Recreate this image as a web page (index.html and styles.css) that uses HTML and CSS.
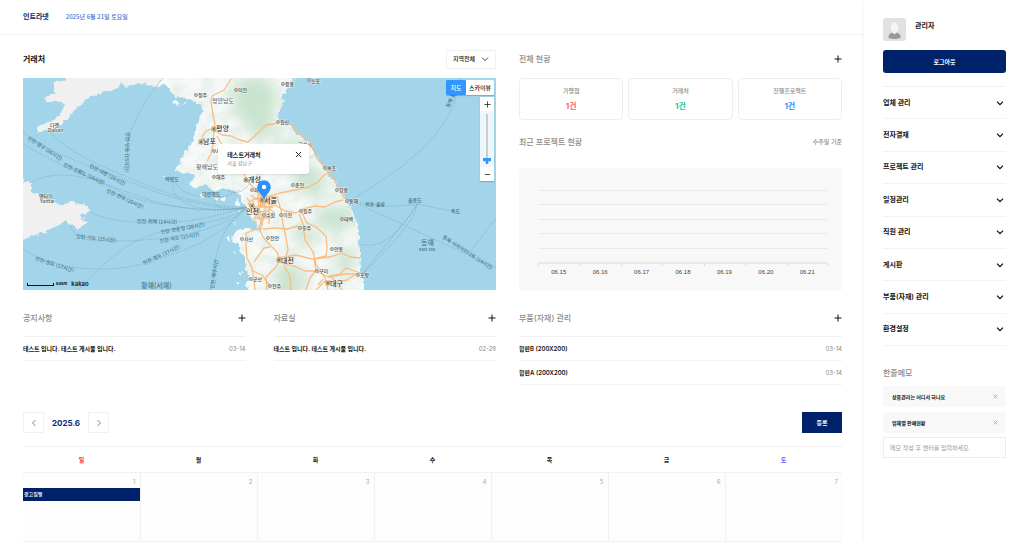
FILE: index.html
```
<!DOCTYPE html>
<html lang="ko">
<head>
	<meta charset="utf-8">
	<meta name="viewport" content="width=device-width, initial-scale=1.0">
	<title>인트라넷</title>
	<link rel="stylesheet" href="styles.css">
</head>
<body>

<svg class="defs" width="0" height="0">
	<symbol id="plus" viewBox="0 0 8 8"><path d="M4 0.5v7M0.5 4h7" fill="none" stroke="currentColor"/></symbol>
	<symbol id="down" viewBox="0 0 8 8"><path d="M1 2.6l3 3 3-3" fill="none" stroke="currentColor"/></symbol>
	<symbol id="close" viewBox="0 0 8 8"><path d="M1 1l6 6M7 1l-6 6" fill="none" stroke="currentColor"/></symbol>
</svg>

<div class="wrap">
	<div class="container">
		<header class="header">
			<h1><a href="#">인트라넷</a></h1>
			<span class="today">2025년 6월 21일 토요일</span>
		</header>

		<main class="main">
			<div class="dash">
				<!-- 거래처 지도 -->
				<section class="client">
					<div class="tit">
						<h2>거래처</h2>
						<div class="area">
							<select aria-label="지역">
								<option>지역전체</option>
							</select>
							<svg><use href="#down"/></svg>
						</div>
					</div>
					<div class="map">
						<svg class="mapImg" viewBox="23 78 473 212" preserveAspectRatio="xMidYMid slice">
							<defs>
								<filter id="coast" x="-5%" y="-5%" width="110%" height="110%">
									<feTurbulence type="fractalNoise" baseFrequency="0.2" numOctaves="2" seed="4"/>
									<feDisplacementMap in="SourceGraphic" scale="6" xChannelSelector="R" yChannelSelector="G"/>
								</filter>
								<filter id="terrain" x="0" y="0" width="100%" height="100%">
									<feTurbulence type="fractalNoise" baseFrequency="0.07 0.09" numOctaves="5" seed="9"/>
									<feColorMatrix values="0 0 0 0 0.62  0 0 0 0 0.78  0 0 0 0 0.65  2.6 0 0 0 -0.95" result="n"/>
									<feComposite in="n" in2="SourceGraphic" operator="in"/>
								</filter>
								<filter id="soft"><feGaussianBlur stdDeviation="7"/></filter>
								<clipPath id="landClip">
									<path d="M163 78L157 88L165 84L172 92L176 97L188 98L193 102L203 105L202 113L198 121L196 130L193 140L187 150L181 158L179 166L174 172L188 173L195 176L189 184L196 190L205 184L215 193L222 188L232 190L240 195L245 205L247 210L250 216L255 222L258 232L250 228L240 229L232 236L231 243L238 244L240 250L245 258L246 270L250 278L246 284L249 292H363L364 280L360 270L361 255L359 245L359 232L354 217L348 203L341 190L335 182L326 172L318 158L311 145L305 141L295 132L288 124L279 120L278 112L284 105L283 95L290 86L300 78Z"/>
								</clipPath>
								<g id="dot">
									<circle r="1.6" fill="#fff" stroke="#666" stroke-width="0.6"/>
									<circle r="0.7" fill="#555"/>
								</g>
								<g id="dotBig">
									<rect x="-2" y="-2" width="4" height="4" rx="1" fill="#e6d8a6" stroke="#7a6a35" stroke-width="0.6"/>
									<circle r="0.9" fill="#5c4f25"/>
								</g>
							</defs>

							<rect x="23" y="78" width="473" height="212" fill="#a2d5ea"/>

							<!-- 중국 -->
							<g filter="url(#coast)" fill="#f0f0f0">
								<path d="M69 70L65 80L54 83L53 88L56 92L45 97L46 102L57 102L65 104L61 113L56 119L47 123L38 126L38 133L45 130L52 129L62 124L72 113L83 103L93 96L105 92L118 88L121 83L126 88L140 83L155 87L159 83L165 70Z"/>
								<path d="M18 176L23 180L32 183L32 192L38 195L50 202L60 205L72 202L78 204L89 205L90 212L80 215L87 223L78 229L65 222L53 228L43 233L32 236L18 242Z"/>
							</g>

							<!-- 한반도 -->
							<g filter="url(#coast)">
								<path fill="#f7f9f8" d="M165 70L157 88L165 84L172 92L176 97L188 98L193 102L203 105L202 113L198 121L196 130L193 140L187 150L181 158L179 166L174 172L188 173L195 176L189 184L196 190L205 184L215 193L222 188L232 190L240 195L245 205L247 210L250 216L255 222L258 232L250 228L240 229L232 236L231 243L238 244L240 250L245 258L246 270L250 278L246 284L249 298H364L364 280L360 270L361 255L359 245L359 232L354 217L348 203L341 190L335 182L326 172L318 158L311 145L305 141L295 132L288 124L279 120L278 112L284 105L283 95L290 86L300 70Z"/>
								<path fill="#f7f9f8" d="M172 102l5-2 3 3-4 2zM184 102l3 1-2 2zM200 194l5 1-1 3-4-1zM212 196l6 1-2 3zM220 199l4-2 2 4-4 1zM236 199l5 3-2 6-4-3zM238 210l2 2-2 2zM234 222l2 1-1 2zM228 237l2 2-2 3zM235 250l2 2-2 2zM240 272l2 2-3 2zM236 281l3 1-2 3zM163 175l3 1-2 1z"/>
							</g>
							<g clip-path="url(#landClip)">
								<g filter="url(#soft)" fill="#b9dcc0" opacity="0.75">
									<ellipse cx="254" cy="100" rx="22" ry="24"/>
									<ellipse cx="262" cy="128" rx="14" ry="10"/>
									<ellipse cx="292" cy="147" rx="12" ry="8"/>
									<ellipse cx="309" cy="180" rx="20" ry="12" transform="rotate(50 309 180)"/>
									<ellipse cx="336" cy="218" rx="20" ry="12"/>
									<ellipse cx="289" cy="283" rx="14" ry="20"/>
									<ellipse cx="303" cy="235" rx="12" ry="8"/>
									<ellipse cx="345" cy="262" rx="8" ry="16"/>
								</g>
								<rect x="160" y="78" width="210" height="212" filter="url(#terrain)" opacity="0.4"/>
							</g>

							<!-- 도로 -->
							<g fill="none" stroke="#f9bd82" stroke-width="1.3" stroke-linejoin="round">
								<path d="M231 79L224 90L212 96L211 102L213 115L215 124L214 128L206 131L202 137L201 143"/>
								<path d="M214 129L213 145L211 154L207 161M214 130L222 135L231 136L240 140L248 142L258 133L266 125L274 124L281 122L290 124L299 133L309 141L313 147L316 157L325 168L333 178L339 189L345 199"/>
								<path d="M217 136L225 150L236 161L243 172L248 182L256 190L262 198M262 198L270 196L280 193L295 190L309 187L318 182L324 175L328 173"/>
								<path d="M262 202L275 205L285 211L296 213L303 209L315 206L325 207L335 202L343 200M268 196L277 197L281 210L283 224L286 238L288 250L284 262L285 268L290 276L291 290"/>
								<path d="M262 200L259 208L262 218L259 228L263 237L268 243L277 252L280 260L275 268L266 277L267 290M277 258L296 255L312 259L330 257L342 253L350 257L360 258M280 262L294 266L305 271L316 271L328 277L345 274L358 274"/>
								<path d="M299 214L303 224L305 240L313 252L316 264L325 278L328 290M300 209L307 223L316 227L326 236L327 247L326 256L314 259L316 270L310 278L306 290"/>
								<path d="M260 228L246 233L246 245L247 258L252 268L254 280L255 290M263 229L275 228L287 229L298 226M264 216L260 232M254 262L264 248L270 247M251 270L262 275L270 286"/>
								<path d="M330 275L336 282L347 280L356 274M328 277L340 274L346 268L360 273M326 280L316 290M330 280L343 290M323 279L318 285"/>
								<path d="M249 202L257 198L271 199L273 204L268 211L258 212L251 208L248 203M253 198L254 214M258 192L259 220M264 192L266 218M269 196L269 224M252 207L273 207M254 218L272 218M251 195L275 213M247 198L263 225M273 197L252 213M265 195L253 222"/>
							</g>

							<!-- 휴전선 -->
							<path d="M228 191C240 196 246 188 250 183S262 169 278 166S303 163 310 158S316 152 313 148" fill="none" stroke="#999" stroke-width="0.6" stroke-dasharray="1.5 1"/>

							<!-- 항로 -->
							<g fill="none" stroke="#76a5b6" stroke-width="0.6" stroke-dasharray="1.6 1.2">
								<path d="M163 78C152 90 142 106 134 124S126 152 130 168"/>
								<path d="M48 128C60 150 110 170 144 184S210 207 244 207"/>
								<path d="M23 132C60 160 100 168 126 180S210 211 244 208"/>
								<path d="M23 144C70 172 120 190 150 200S215 212 246 208"/>
								<path d="M30 183C42 176 60 172 86 178S120 196 150 202S220 213 246 207"/>
								<path d="M90 212C104 220 130 223 160 223S225 214 247 207"/>
								<path d="M70 226C78 242 90 241 120 241S220 235 247 207"/>
								<path d="M23 248C50 272 115 273 145 263S215 244 247 207"/>
								<path d="M78 290C105 260 130 240 160 232S230 222 247 207"/>
								<path d="M210 290C216 262 214 232 247 207M175 181C178 190 188 196 207 197S232 194 240 190M173 182C170 202 195 214 246 208M214 197C214 210 225 211 246 207"/>
								<path d="M460 78C456 120 424 158 352 199M352 201C375 207 400 207 417 204M352 201L496 268M417 204L451 211M417 204C405 225 378 252 363 274M417 204C415 225 378 256 363 274M417 204C400 232 382 250 361 244M496 218L470 252"/>
							</g>

							<g class="seaTxt">
								<text transform="translate(27 139) rotate(33)">인천-영구 (26시간)</text>
								<text transform="translate(63 166) rotate(25)">인천-진황도 (24시간)</text>
								<text transform="translate(89 167) rotate(28)">인천-대련 (16시간)</text>
								<text transform="translate(126 132) rotate(92)">인천-단동 (15시간)</text>
								<text transform="translate(106 192) rotate(25)">인천-연태 (16시간)</text>
								<text transform="translate(137 223) rotate(1)">인천-위해 (14시간)</text>
								<text transform="translate(161 234) rotate(-10)">인천-연운항 (26시간)</text>
								<text transform="translate(160 243) rotate(-10)">인천-석도 (15시간)</text>
								<text transform="translate(76 238) rotate(6)">인천-석도 (15시간)</text>
								<text transform="translate(35 260) rotate(18)">인천-청도 (17시간)</text>
								<text transform="translate(144 265) rotate(-25)">인천-청도 (17시간)</text>
								<text transform="translate(214 289) rotate(-82)">인천-제주시간</text>
								<text transform="translate(365 206) rotate(2)">묵호-울릉</text>
								<text transform="translate(442 238) rotate(33)">동해-사카이미나토 (14시간)</text>
								<text transform="translate(449 108) rotate(-65)">동해-블</text>
								<text x="408" y="202">울릉도</text>
								<text x="451" y="213">독도</text>
								<text x="202" y="196">대연평도</text>
								<text x="165" y="181">백령도</text>
								<text class="big" x="141" y="288">황해(서해)</text>
								<text class="big" x="421" y="245">동해</text>
								<text class="en" x="419" y="251">East Sea</text>
							</g>

							<g class="cityTxt">
								<text x="50" y="127">다롄</text>
								<text x="48" y="132">Dalian</text>
								<text x="39" y="198">옌타이</text>
								<text x="40" y="203">Yantai</text>
								<text class="prov" x="212" y="103">평안남도</text>
								<text class="prov" x="196" y="169">황해남도</text>
								<g transform="translate(196 95)"><use href="#dot"/><text x="2" y="2">정주</text></g>
								<g transform="translate(236 90)"><use href="#dot"/><text x="2" y="2">덕천</text></g>
								<g transform="translate(283 84)"><use href="#dot"/><text x="2" y="2">함흥</text></g>
								<g transform="translate(309 80)"><use href="#dot"/><text x="2" y="3">신포</text></g>
								<g transform="translate(278 122)"><use href="#dot"/><text x="2" y="2">원산</text></g>
								<g transform="translate(214 151)"><use href="#dot"/><text x="2" y="2">사리원</text></g>
								<g transform="translate(214 177)"><use href="#dot"/><text x="2" y="2">해주</text></g>
								<text x="298" y="146">고성시</text>
								<g transform="translate(325 168)"><use href="#dot"/><text x="2" y="2">속초</text></g>
								<g transform="translate(293 185)"><use href="#dot"/><text x="2" y="2">춘천</text></g>
								<g transform="translate(337 190)"><use href="#dot"/><text x="2" y="2">강릉</text></g>
								<g transform="translate(347 201)"><use href="#dot"/><text x="2" y="2">동해</text></g>
								<g transform="translate(342 219)"><use href="#dot"/><text x="2" y="2">태백</text></g>
								<g transform="translate(301 211)"><use href="#dot"/><text x="2" y="2">원주</text></g>
								<g transform="translate(264 215)"><use href="#dot"/><text x="2" y="2">수원</text></g>
								<g transform="translate(281 215)"><use href="#dot"/><text x="2" y="2">이천</text></g>
								<g transform="translate(300 228)"><use href="#dot"/><text x="2" y="2">충주</text></g>
								<g transform="translate(242 239)"><use href="#dot"/><text x="2" y="2">서산</text></g>
								<g transform="translate(268 238)"><use href="#dot"/><text x="2" y="2">천안</text></g>
								<g transform="translate(332 249)"><use href="#dot"/><text x="2" y="2">안동</text></g>
								<g transform="translate(317 271)"><use href="#dot"/><text x="2" y="2">구미</text></g>
								<g transform="translate(358 275)"><use href="#dot"/><text x="2" y="2">포항</text></g>
								<g transform="translate(251 279)"><use href="#dot"/><text x="2" y="2">군산</text></g>
								<g transform="translate(270 286)"><use href="#dot"/><text x="2" y="2">전주</text></g>
								<g transform="translate(252 190)"><use href="#dot"/><text x="2" y="2">파주</text></g>
							</g>

							<g class="metroTxt">
								<g transform="translate(214 129)"><use href="#dotBig"/><text x="2" y="2">평양</text></g>
								<g transform="translate(201 142)"><use href="#dotBig"/><text x="2" y="2">남포</text></g>
								<g transform="translate(246 180)"><use href="#dotBig"/><text x="2" y="2">개성</text></g>
								<g transform="translate(262 200)"><use href="#dotBig"/><text x="2" y="3">서울</text></g>
								<g transform="translate(252 206)"><use href="#dotBig"/><text x="-6" y="8">인천</text></g>
								<g transform="translate(279 260)"><use href="#dotBig"/><text x="2" y="3">대전</text></g>
								<g transform="translate(328 283)"><use href="#dotBig"/><text x="2" y="3">대구</text></g>
							</g>

							<!-- 마커 -->
							<path d="M264 199.500C262.500 195 257.200 192 257.200 187A6.800 6.800 0 0 1 270.800 187C270.800 192 265.500 195 264 199.500Z" fill="#2f8ffb"/>
							<circle cx="264" cy="187" r="2.200" fill="#fff"/>
						</svg>

						<div class="mapType">
							<button type="button" class="on">지도</button>
							<button type="button">스카이뷰</button>
						</div>
						<div class="mapZoom">
							<button type="button" aria-label="확대"><svg><use href="#plus"/></svg></button>
							<input type="range" min="0" max="14" value="0" aria-label="지도 확대 수준">
							<button type="button" aria-label="축소"><svg viewBox="0 0 8 8"><path d="M1 4h6" stroke="#333"/></svg></button>
						</div>
						<div class="info">
							<div>
								<strong>테스트거래처</strong>
								<p>서울 강남구</p>
							</div>
							<button type="button" aria-label="닫기"><svg><use href="#close"/></svg></button>
						</div>
						<div class="scale">
							<i></i><span>64km</span><b>kakao</b>
						</div>
					</div>
				</section>

				<!-- 현황 -->
				<section class="state">
					<div class="tit">
						<h3>전체 현황</h3>
						<a href="#" class="more" aria-label="전체 현황 더보기"><svg><use href="#plus"/></svg></a>
					</div>
					<ul class="count">
						<li><span>가맹점</span><b class="red">1건</b></li>
						<li><span>거래처</span><b class="green">1건</b></li>
						<li><span>진행프로젝트</span><b class="blue">1건</b></li>
					</ul>
					<div class="tit tit-chart">
						<h3>최근 프로젝트 현황</h3>
						<span class="std">수주일 기준</span>
					</div>
					<div class="chart">
						<div class="plot"><i></i><i></i><i></i><i></i><i></i></div>
						<ol class="axis">
							<li>06.15</li>
							<li>06.16</li>
							<li>06.17</li>
							<li>06.18</li>
							<li>06.19</li>
							<li>06.20</li>
							<li>06.21</li>
						</ol>
					</div>
				</section>
			</div>

			<!-- 게시판 -->
			<div class="dash boards">
				<div class="pair">
					<section>
						<div class="tit">
							<h3>공지사항</h3>
							<a href="#" class="more" aria-label="공지사항 더보기"><svg><use href="#plus"/></svg></a>
						</div>
						<ul class="list">
							<li><a href="#">테스트 입니다. 테스트 게시물 입니다.</a><span>03-14</span></li>
						</ul>
					</section>
					<section>
						<div class="tit">
							<h3>자료실</h3>
							<a href="#" class="more" aria-label="자료실 더보기"><svg><use href="#plus"/></svg></a>
						</div>
						<ul class="list">
							<li><a href="#">테스트 입니다. 테스트 게시물 입니다.</a><span>02-28</span></li>
						</ul>
					</section>
				</div>
				<section>
					<div class="tit">
						<h3>부품(자재) 관리</h3>
						<a href="#" class="more" aria-label="부품(자재) 관리 더보기"><svg><use href="#plus"/></svg></a>
					</div>
					<ul class="list">
						<li><a href="#">합판B (200X200)</a><span>03-14</span></li>
						<li><a href="#">합판A (200X200)</a><span>03-14</span></li>
					</ul>
				</section>
			</div>

			<!-- 일정 -->
			<section class="schedule">
				<div class="calTop">
					<button type="button" class="arrow" aria-label="이전 달"><svg viewBox="0 0 8 8"><path d="M5.500 1l-3 3 3 3" fill="none" stroke="#777" stroke-width="0.900"/></svg></button>
					<strong>2025.6</strong>
					<button type="button" class="arrow" aria-label="다음 달"><svg viewBox="0 0 8 8"><path d="M2.500 1l3 3-3 3" fill="none" stroke="#777" stroke-width="0.900"/></svg></button>
					<button type="button" class="reg">등록</button>
				</div>
				<table class="cal">
					<thead>
						<tr>
							<th class="sun">일</th>
							<th>월</th>
							<th>화</th>
							<th>수</th>
							<th>목</th>
							<th>금</th>
							<th class="sat">토</th>
						</tr>
					</thead>
					<tbody>
						<tr>
							<td><span>1</span><a href="#" class="event">광고집행</a></td>
							<td><span>2</span></td>
							<td><span>3</span></td>
							<td><span>4</span></td>
							<td><span>5</span></td>
							<td><span>6</span></td>
							<td><span>7</span></td>
						</tr>
					</tbody>
				</table>
			</section>
		</main>
	</div>

	<aside class="side">
		<div class="user">
			<svg viewBox="0 0 23 23">
				<rect width="23" height="23" rx="3" fill="#e1e1e1"/>
				<path d="M5.500 20C5 16 8 14.500 11.500 14.500S18 16 17.500 20Q11.500 22 5.500 20Z" fill="#999"/>
				<path d="M9.500 12h4v3q-2 2-4 0z" fill="#eee"/>
				<ellipse cx="11.500" cy="9.500" rx="3.800" ry="5" fill="#f6f6f6"/>
				<path d="M9.500 9h1M12.500 9h1M10.300 12q1.200 0.800 2.400 0" fill="none" stroke="#d0d0d0" stroke-width="0.600"/>
			</svg>
			<strong>관리자</strong>
		</div>
		<button type="button" class="logout">로그아웃</button>
		<nav>
			<ul class="menu">
				<li><a href="#">업체 관리<svg><use href="#down"/></svg></a></li>
				<li><a href="#">전자결재<svg><use href="#down"/></svg></a></li>
				<li><a href="#">프로젝트 관리<svg><use href="#down"/></svg></a></li>
				<li><a href="#">일정관리<svg><use href="#down"/></svg></a></li>
				<li><a href="#">직원 관리<svg><use href="#down"/></svg></a></li>
				<li><a href="#">게시판<svg><use href="#down"/></svg></a></li>
				<li><a href="#">부품(자재) 관리<svg><use href="#down"/></svg></a></li>
				<li><a href="#">환경설정<svg><use href="#down"/></svg></a></li>
			</ul>
		</nav>
		<div class="memo">
			<h3><label for="memo">한줄메모</label></h3>
			<ul>
				<li>상품관리는 어디서 하나요<button type="button" aria-label="삭제"><svg><use href="#close"/></svg></button></li>
				<li>업체별 판매현황<button type="button" aria-label="삭제"><svg><use href="#close"/></svg></button></li>
			</ul>
			<input type="text" id="memo" placeholder="메모 작성 후 엔터를 입력하세요.">
		</div>
	</aside>
</div>

</body>
</html>
```
FILE: styles.css
```
*{
	box-sizing: border-box;
	margin: 0;
	padding: 0;
}
body{
	background: #fff;
	color: #111;
	font: 6px/12px Inter, "Noto Sans CJK KR", sans-serif;
}
ul, ol{
	list-style: none;
}
a{
	color: inherit;
	text-decoration: none;
}
button, input, select{
	border: 0;
	background: none;
	color: inherit;
	font: inherit;
}
button{
	cursor: pointer;
}
svg{
	display: block;
	flex: none;
	width: 8px;
	height: 8px;
}
.defs{
	position: absolute;
	width: 0;
	height: 0;
}

.wrap{
	display: flex;
	min-height: 100vh;
}
.container{
	flex: 1;
	min-width: 0;
}
.header{
	display: flex;
	align-items: center;
	gap: 17px;
	height: 35px;
	padding: 0 23px;
	border-bottom: 1px solid #f3f3f3;
}
.header h1{
	font-size: 7px;
	color: #00226b;
}
.header .today{
	font-family: "Noto Sans CJK KR", sans-serif;
	font-weight: 500;
	color: #3f70cc;
}
.main{
	padding: 12px 22px 0 23px;
}

/* 공통 타이틀 */
.tit{
	display: flex;
	align-items: center;
	justify-content: space-between;
	height: 24px;
}
.tit h2{
	font-size: 8px;
	font-weight: 700;
}
.tit h3,
.memo h3{
	font-size: 8px;
	font-weight: 500;
	color: #8c8c8c;
}
.tit .more svg{
	color: #111;
}
.tit .std{
	font-weight: 500;
	color: #8c8c8c;
}

.dash{
	display: grid;
	grid-template-columns: 473fr 323fr;
	column-gap: 23px;
}

/* 지도 */
.area{
	position: relative;
}
.area select{
	width: 50px;
	height: 19px;
	padding: 0 8px 0 6px;
	border: 1px solid #f1f1f1;
	appearance: none;
	font-weight: 500;
	font-size: 6px;
}
.area svg{
	position: absolute;
	right: 7px;
	top: 5px;
	color: #444;
	pointer-events: none;
}
.map{
	position: relative;
	margin-top: 7px;
	overflow: hidden;
}
.mapImg{
	width: 100%;
	height: auto;
	aspect-ratio: 473 / 212;
}
.mapImg text{
	font-family: "Noto Sans CJK KR", sans-serif;
	font-size: 5px;
	font-weight: 500;
}
.seaTxt text{
	fill: #4a7685;
}
.seaTxt .big{
	font-size: 7px;
}
.seaTxt .en{
	font-size: 4px;
}
.cityTxt text{
	fill: #555;
	stroke: #fff;
	stroke-width: 1px;
	stroke-opacity: .6;
	paint-order: stroke;
}
.cityTxt .prov{
	font-size: 6px;
	fill: #777;
}
.metroTxt text{
	font-size: 7px;
	fill: #333;
	stroke: #fff;
	stroke-width: 1px;
	stroke-opacity: .6;
	paint-order: stroke;
}
.mapType{
	position: absolute;
	right: 2px;
	top: 2px;
	display: flex;
	background: #fff;
	border-radius: 1px;
	box-shadow: 0 1px 1px rgba(0,0,0,.2);
}
.mapType button{
	height: 15px;
	padding: 0 3px;
	font-weight: 500;
}
.mapType .on{
	width: 20px;
	background: #3396ff;
	border-radius: 1px;
	color: #fff;
}
.mapZoom{
	position: absolute;
	right: 2px;
	top: 19px;
	display: flex;
	flex-direction: column;
	width: 14px;
	background: rgba(255,255,255,.8);
	box-shadow: 0 1px 1px rgba(0,0,0,.2);
}
.mapZoom button{
	display: flex;
	align-items: center;
	justify-content: center;
	height: 14px;
	background: #fff;
	color: #333;
}
.mapZoom svg{
	width: 7px;
	height: 7px;
}
.mapZoom input{
	width: 14px;
	height: 50px;
	margin: 3px 0;
	appearance: none;
	writing-mode: vertical-lr;
	direction: rtl;
}
.mapZoom input::-webkit-slider-runnable-track{
	width: 2px;
	height: 50px;
	background: #ccc;
}
.mapZoom input::-webkit-slider-thumb{
	appearance: none;
	width: 8px;
	height: 6px;
	margin-left: -3px;
	background: #3396ff;
	clip-path: polygon(0 0, 100% 0, 100% 50%, 65% 60%, 65% 100%, 35% 100%, 35% 60%, 0 50%);
}
.info{
	position: absolute;
	left: 41.300%;
	top: 31%;
	display: flex;
	justify-content: space-between;
	width: 91px;
	height: 30px;
	padding: 6px 7px 0 9px;
	background: #fff;
	border-radius: 3px;
	box-shadow: 0 1px 2px rgba(0,0,0,.1);
}
.info strong{
	display: block;
	font-size: 6px;
	line-height: 10px;
}
.info p{
	font-size: 5px;
	line-height: 7px;
	color: #888;
}
.info button{
	height: 10px;
}
.info svg{
	width: 7px;
	height: 7px;
}
.scale{
	position: absolute;
	left: 4px;
	bottom: 1px;
	display: flex;
	align-items: center;
	gap: 2px;
	line-height: 10px;
}
.scale i{
	width: 27px;
	height: 3px;
	border: 1px solid #111;
	border-top: 0;
}
.scale span{
	font-size: 4px;
	font-weight: 700;
}
.scale b{
	margin-left: 2px;
	font-weight: 600;
}

/* 현황 */
.count{
	display: flex;
	gap: 5px;
	margin-top: 7px;
}
.count li{
	flex: 1;
	height: 42px;
	padding-top: 6px;
	border: 1px solid #eee;
	border-radius: 4px;
	text-align: center;
}
.count span{
	display: block;
	font-weight: 500;
	color: #8c8c8c;
}
.count b{
	display: block;
	line-height: 18px;
	font-size: 8px;
}
.red{
	color: #ff6565;
}
.green{
	color: #14cc93;
}
.blue{
	color: #1494ff;
}
.tit-chart{
	margin-top: 10px;
}
.chart{
	margin-top: 14px;
	padding: 22px 14px 14px 19px;
	background: #f8f8f8;
	border-radius: 4px;
}
.plot{
	display: flex;
	flex-direction: column;
	height: 74px;
	border-bottom: 2px solid #e8e8e8;
}
.plot i{
	flex: 1;
	border-top: 1px solid #eaeaea;
}
.axis{
	display: flex;
}
.axis li{
	flex: 1;
	padding-top: 3px;
	text-align: center;
	font: 6px/10px "Liberation Sans", sans-serif;
	color: #444;
	background: linear-gradient(#ddd, #ddd) left top / 1px 2px no-repeat;
}
.axis li:last-child{
	background: linear-gradient(#ddd, #ddd) left top / 1px 2px no-repeat, linear-gradient(#ddd, #ddd) right top / 1px 2px no-repeat;
}

/* 게시판 */
.boards{
	min-height: 96px;
	margin-top: 15px;
}
.pair{
	display: grid;
	grid-template-columns: 1fr 1fr;
	column-gap: 28px;
}
.list{
	margin-top: 6px;
	border-top: 1px solid #f1f1f1;
}
.list li{
	display: flex;
	align-items: center;
	justify-content: space-between;
	height: 24px;
	border-bottom: 1px solid #f3f3f3;
}
.list a{
	font-weight: 600;
}
.list span{
	color: #888;
}

/* 일정 */
.calTop{
	display: flex;
	align-items: center;
	margin-top: 10px;
}
.calTop strong{
	padding: 0 8px;
	font-size: 8px;
	color: #0b2a70;
}
.arrow{
	display: flex;
	align-items: center;
	justify-content: center;
	width: 21px;
	height: 21px;
	border: 1px solid #f1f1f1;
}
.reg{
	width: 40px;
	height: 21px;
	margin-left: auto;
	background: #00226b;
	color: #fff;
	font-weight: 600;
}
.cal{
	width: 100%;
	margin-top: 13px;
	border-collapse: collapse;
	table-layout: fixed;
}
.cal th{
	height: 26px;
	border-top: 1px solid #f1f1f1;
	font-weight: 700;
}
.cal .sun{
	color: #f22;
}
.cal .sat{
	color: #66f;
}
.cal td{
	height: 69px;
	padding-top: 3px;
	border: 1px solid #f1f1f1;
	border-left: 0;
	background: #fdfdfd;
	vertical-align: top;
}
.cal td:last-child{
	border-right: 0;
}
.cal td span{
	display: block;
	padding-right: 4px;
	text-align: right;
	color: #aaa;
}
.event{
	display: block;
	height: 13px;
	padding-left: 1px;
	background: #00226b;
	color: #fff;
	font-size: 5px;
	font-weight: 500;
	line-height: 13px;
}

/* 사이드 */
.side{
	flex: none;
	width: 160px;
	padding: 18px 18px 0 19px;
	box-shadow: 0 0 5px rgba(0,0,0,.06);
	background: #fff;
}
.user{
	display: flex;
	gap: 9px;
	font-size: 7px;
	line-height: 15px;
}
.user svg{
	width: 23px;
	height: 23px;
}
.logout{
	width: 100%;
	height: 23px;
	margin-top: 9px;
	background: #00226b;
	border-radius: 3px;
	color: #fff;
	font-weight: 600;
}
.menu{
	display: grid;
	grid-auto-rows: 1fr;
	min-height: 260px;
	margin-top: 13px;
	border-top: 1px solid #f1f1f1;
}
.menu a{
	display: flex;
	align-items: center;
	justify-content: space-between;
	height: 100%;
	padding-right: 2px;
	border-bottom: 1px solid #f3f3f3;
	font-size: 7px;
	font-weight: 600;
}
.menu svg{
	stroke-width: 1.300;
}
.memo{
	margin-top: 21px;
}
.memo ul{
	display: grid;
	gap: 5px;
	margin: 7px 0 4px;
}
.memo li{
	display: flex;
	align-items: center;
	justify-content: space-between;
	height: 21px;
	padding: 0 8px 0 9px;
	background: #f8f8f8;
	border-radius: 3px;
	font-size: 5px;
	font-weight: 600;
}
.memo li svg{
	width: 5px;
	height: 5px;
	color: #888;
}
.memo input{
	width: 100%;
	height: 21px;
	padding: 0 6px;
	border: 1px solid #eee;
}
.memo input::placeholder{
	color: #999;
}
```
